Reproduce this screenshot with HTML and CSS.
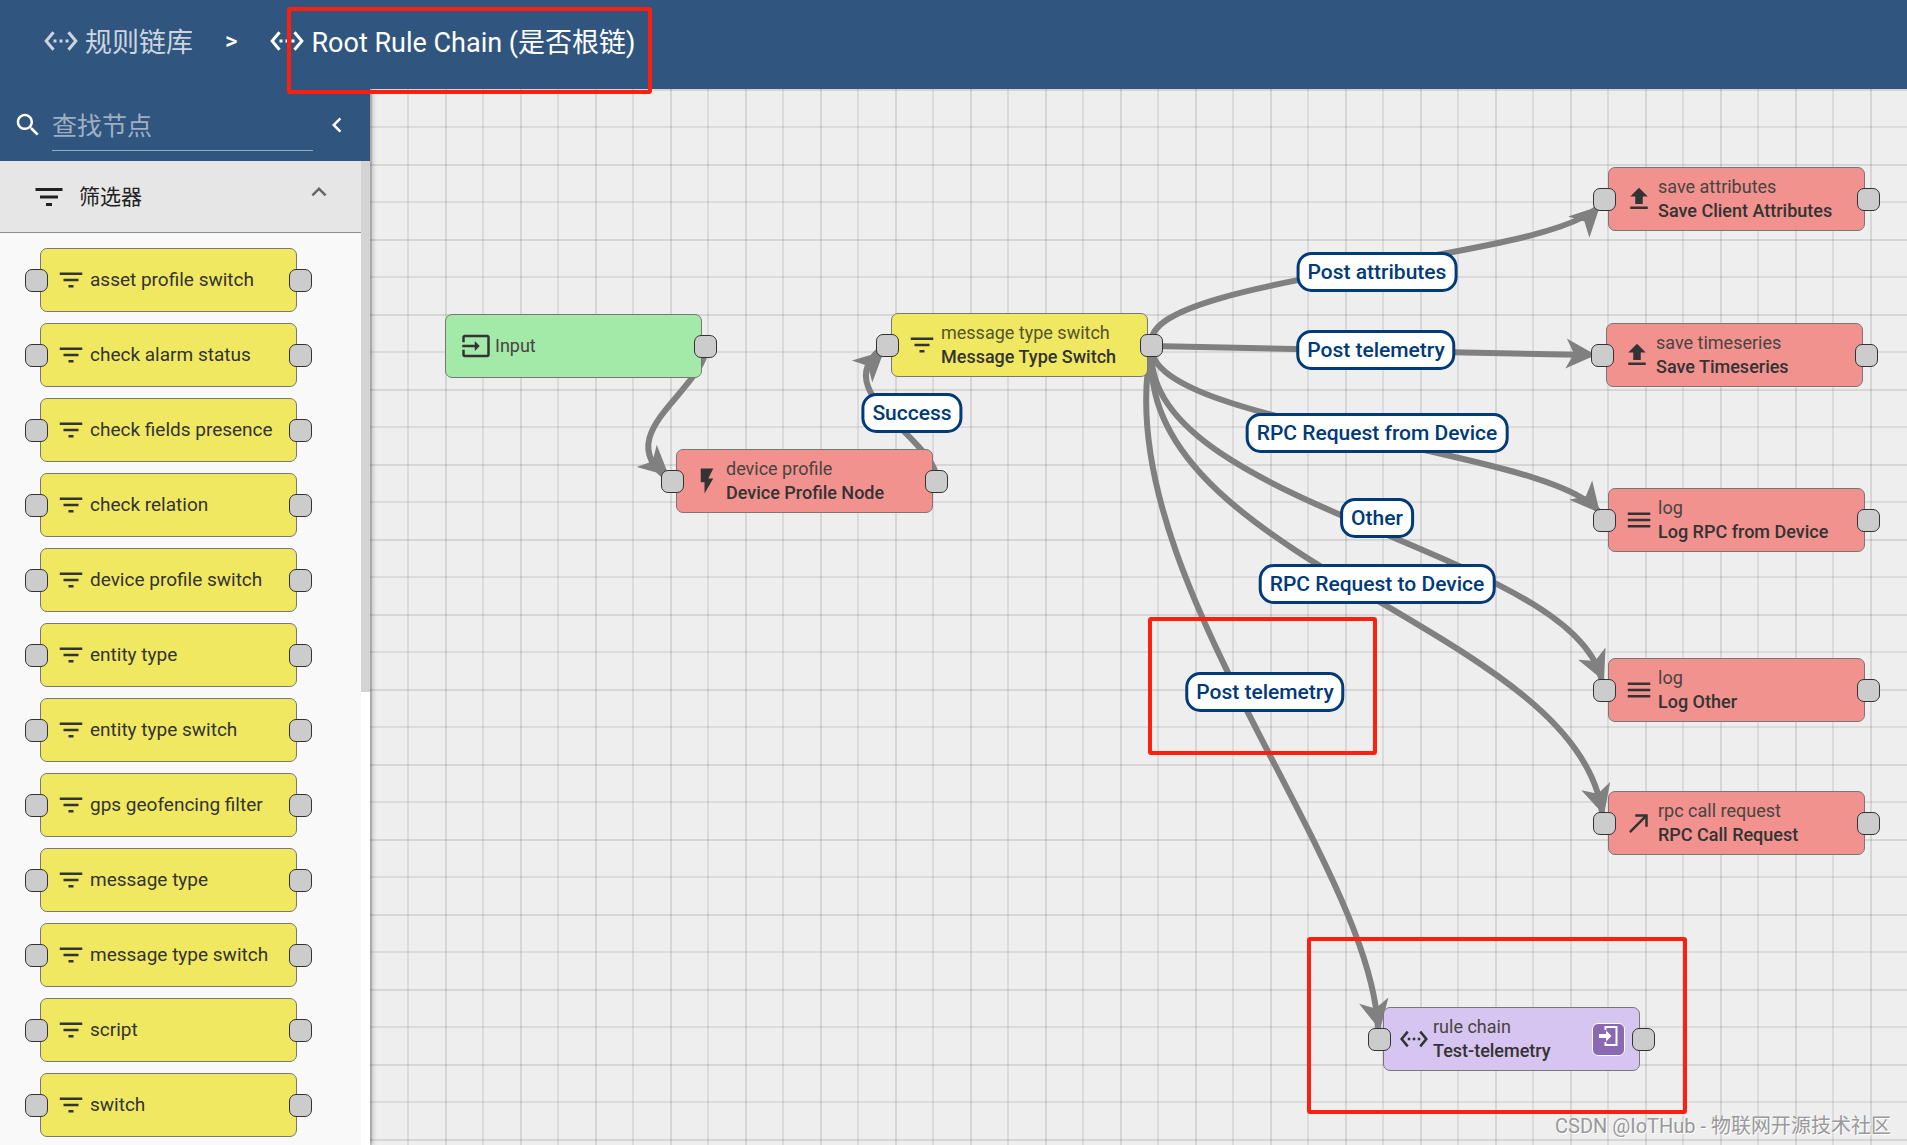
FILE: index.html
```html
<!DOCTYPE html>
<html lang="zh-CN">
<head>
<meta charset="utf-8">
<title>Root Rule Chain</title>
<link rel="stylesheet" href="styles.css">
</head>
<body>
<svg class="defs" aria-hidden="true">
  <symbol id="i-chain" viewBox="0 0 24 24"><path d="M7.77 6.76L6.23 5.48.82 12l5.41 6.52 1.54-1.28L3.42 12l4.35-5.24zM7 13h2v-2H7v2zm10-2h-2v2h2v-2zm-6 2h2v-2h-2v2zm6.77-7.52l-1.54 1.28L20.58 12l-4.35 5.24 1.54 1.28L23.18 12l-5.41-6.52z"/></symbol>
  <symbol id="i-filter" viewBox="0 0 24 24"><path d="M10 18h4v-2h-4v2zM3 6v2h18V6H3zm3 7h12v-2H6v2z"/></symbol>
  <symbol id="i-search" viewBox="0 0 24 24"><path d="M15.5 14h-.79l-.28-.27C15.41 12.59 16 11.11 16 9.5 16 5.91 13.09 3 9.5 3S3 5.91 3 9.5 5.91 16 9.5 16c1.61 0 3.09-.59 4.23-1.57l.27.28v.79l5 4.99L20.49 19l-4.99-5zm-6 0C7.01 14 5 11.99 5 9.5S7.01 5 9.5 5 14 7.01 14 9.5 11.99 14 9.5 14z"/></symbol>
  <symbol id="i-left" viewBox="0 0 24 24"><path d="M15.41 7.41L14 6l-6 6 6 6 1.41-1.41L10.83 12z"/></symbol>
  <symbol id="i-up" viewBox="0 0 24 24"><path d="M12 8l-6 6 1.41 1.41L12 10.83l4.59 4.58L18 14z"/></symbol>
  <symbol id="i-input" viewBox="0 0 24 24"><path d="M21 3.01H3c-1.100 0-2 .9-2 2V9h2V4.990h18v14.030H3V15H1v4.010c0 1.100.9 1.980 2 1.980h18c1.100 0 2-.88 2-1.980v-14c0-1.110-.9-2-2-2zM11 16l4-4-4-4v3H1v2h10v3z"/></symbol>
  <symbol id="i-flash" viewBox="0 0 24 24"><path d="M7 2v11h3v9l7-12h-4l4-8z"/></symbol>
  <symbol id="i-upload" viewBox="0 0 24 24"><path d="M5 20h14v-2H5v2zM9 16h6v-6h4l-7-7-7 7h4v6z"/></symbol>
  <symbol id="i-menu" viewBox="0 0 24 24"><path d="M3 18h18v-2H3v2zm0-5h18v-2H3v2zm0-7v2h18V6H3z"/></symbol>
  <symbol id="i-call" viewBox="0 0 24 24"><path d="M9 5v2h6.590L4 18.590 5.410 20 17 8.410V15h2V5z"/></symbol>
  <symbol id="i-open" viewBox="0 0 24 24"><path d="M7.500 2h13v20h-13v-4h2v2h9V4h-9v2h-2V2zM2 10h7V6.500l5.500 5.500L9 17.500V14H2z"/></symbol>
</svg>

<header class="header">
  <a class="crumb crumb-dim" href="#"><svg class="icon-lg"><use href="#i-chain"/></svg>规则链库</a>
  <span class="crumb-sep">&gt;</span>
  <a class="crumb" href="#"><svg class="icon-lg"><use href="#i-chain"/></svg>Root Rule Chain (是否根链)</a>
</header>

<main class="main">
  <aside class="sidebar">
    <div class="search">
      <label for="node-search" aria-label="查找节点"><svg class="icon"><use href="#i-search"/></svg></label>
      <input id="node-search" class="search-input" type="text" placeholder="查找节点">
      <button class="icon-btn" type="button" aria-label="收起"><svg class="icon"><use href="#i-left"/></svg></button>
    </div>
    <div class="library">
      <div class="library-body">
        <button class="group" type="button"><svg class="icon-lg"><use href="#i-filter"/></svg><span class="group-name">筛选器</span><svg class="icon group-arrow"><use href="#i-up"/></svg></button>
        <ul class="node-list">
          <li class="node filter both"><svg class="icon"><use href="#i-filter"/></svg><span>asset profile switch</span></li>
          <li class="node filter both"><svg class="icon"><use href="#i-filter"/></svg><span>check alarm status</span></li>
          <li class="node filter both"><svg class="icon"><use href="#i-filter"/></svg><span>check fields presence</span></li>
          <li class="node filter both"><svg class="icon"><use href="#i-filter"/></svg><span>check relation</span></li>
          <li class="node filter both"><svg class="icon"><use href="#i-filter"/></svg><span>device profile switch</span></li>
          <li class="node filter both"><svg class="icon"><use href="#i-filter"/></svg><span>entity type</span></li>
          <li class="node filter both"><svg class="icon"><use href="#i-filter"/></svg><span>entity type switch</span></li>
          <li class="node filter both"><svg class="icon"><use href="#i-filter"/></svg><span>gps geofencing filter</span></li>
          <li class="node filter both"><svg class="icon"><use href="#i-filter"/></svg><span>message type</span></li>
          <li class="node filter both"><svg class="icon"><use href="#i-filter"/></svg><span>message type switch</span></li>
          <li class="node filter both"><svg class="icon"><use href="#i-filter"/></svg><span>script</span></li>
          <li class="node filter both"><svg class="icon"><use href="#i-filter"/></svg><span>switch</span></li>
        </ul>
      </div>
      <div class="scrollbar"><div class="scroll-thumb"></div></div>
    </div>
  </aside>

  <section class="canvas">
    <svg class="edges" aria-hidden="true">
      <defs><path id="arrow" d="M0 0L-30-15L-22 0L-30 15z"/></defs>
      <g transform="translate(-370 -89)">
        <g class="lines">
          <path d="M706 346C706 390 604 435 671 481"/>
          <path d="M937 481C937 437 820 391 886 345"/>
          <path d="M1152 345C1135 273 1585 260 1603 199"/>
          <path d="M1152 346L1590 355"/>
          <path d="M1152 345C1140 428 1588 450 1603 520"/>
          <path d="M1152 345C1134 509 1596 551 1603 690"/>
          <path d="M1152 345C1130 565 1594 629 1603 823"/>
          <path d="M1152 345C1102 568 1383 872 1378 1039"/>
        </g>
        <g class="heads">
          <use href="#arrow" transform="translate(669 476) rotate(42)"/>
          <use href="#arrow" transform="translate(884 351) rotate(-43)"/>
          <use href="#arrow" transform="translate(1600 206) rotate(-45)"/>
          <use href="#arrow" transform="translate(1596 355) rotate(3)"/>
          <use href="#arrow" transform="translate(1600 513) rotate(50)"/>
          <use href="#arrow" transform="translate(1604 681) rotate(66)"/>
          <use href="#arrow" transform="translate(1604 815) rotate(74)"/>
          <use href="#arrow" transform="translate(1380 1030) rotate(78)"/>
        </g>
      </g>
    </svg>

    <div class="node input out" style="left:75px;top:225px"><svg class="icon"><use href="#i-input"/></svg><span>Input</span></div>
    <div class="node action both" style="left:306px;top:360px"><svg class="icon"><use href="#i-flash"/></svg><span>device profile<b>Device Profile Node</b></span></div>
    <div class="node filter both" style="left:521px;top:224px"><svg class="icon"><use href="#i-filter"/></svg><span>message type switch<b>Message Type Switch</b></span></div>
    <div class="node action both" style="left:1238px;top:78px"><svg class="icon"><use href="#i-upload"/></svg><span>save attributes<b>Save Client Attributes</b></span></div>
    <div class="node action both" style="left:1236px;top:234px"><svg class="icon"><use href="#i-upload"/></svg><span>save timeseries<b>Save Timeseries</b></span></div>
    <div class="node action both" style="left:1238px;top:399px"><svg class="icon"><use href="#i-menu"/></svg><span>log<b>Log RPC from Device</b></span></div>
    <div class="node action both" style="left:1238px;top:569px"><svg class="icon"><use href="#i-menu"/></svg><span>log<b>Log Other</b></span></div>
    <div class="node action both" style="left:1238px;top:702px"><svg class="icon"><use href="#i-call"/></svg><span>rpc call request<b>RPC Call Request</b></span></div>
    <div class="node chain both" style="left:1013px;top:918px"><svg class="icon"><use href="#i-chain"/></svg><span>rule chain<b>Test-telemetry</b></span><button class="open-btn" type="button" aria-label="打开规则链"><svg class="icon-sm"><use href="#i-open"/></svg></button></div>

    <div class="edge-label" style="left:542px;top:324px">Success</div>
    <div class="edge-label" style="left:1007px;top:183px">Post attributes</div>
    <div class="edge-label" style="left:1006px;top:261px">Post telemetry</div>
    <div class="edge-label" style="left:1007px;top:344px">RPC Request from Device</div>
    <div class="edge-label" style="left:1007px;top:429px">Other</div>
    <div class="edge-label" style="left:1007px;top:495px">RPC Request to Device</div>
    <div class="edge-label" style="left:895px;top:603px">Post telemetry</div>

    <div class="mark mark-edge"></div>
    <div class="mark mark-chain"></div>
    <div class="watermark">CSDN @IoTHub - 物联网开源技术社区</div>
  </section>
</main>
<div class="mark mark-title"></div>
</body>
</html>
```
FILE: styles.css
```css
* { box-sizing: border-box; }

body {
  margin: 0;
  height: 100vh;
  display: flex;
  flex-direction: column;
  position: relative;
  overflow: hidden;
  font-family: Roboto, "Noto Sans CJK SC", sans-serif;
  font-size: 18px;
  color: #333;
}

button {
  padding: 0;
  border: 0;
  background: none;
  font: inherit;
  color: inherit;
}

svg { fill: currentColor; flex: none; }
.defs { position: absolute; width: 0; height: 0; }
.icon { width: 30px; height: 30px; display: block; }
.icon-lg { width: 36px; height: 36px; display: block; }
.icon-sm { width: 24px; height: 24px; display: block; }

/* Header */
.header {
  flex: none;
  height: 89px;
  padding: 0 43px 8px;
  display: flex;
  align-items: center;
  background: #305680;
  color: #fff;
  font-size: 27px;
}
.crumb {
  display: flex;
  align-items: center;
  gap: 6px;
  color: #fff;
  text-decoration: none;
  white-space: nowrap;
}
.crumb-dim { color: rgba(255, 255, 255, .75); }
.crumb-sep { padding: 0 32px; font-size: 24px; font-weight: 500; }

.main { flex: 1; min-height: 0; display: flex; }

/* Node library */
.sidebar {
  flex: none;
  width: 370px;
  display: flex;
  flex-direction: column;
  position: relative;
  z-index: 1;
  box-shadow: 1px 0 6px rgba(0, 0, 0, .4);
  clip-path: inset(0 -10px 0 0);
}
.search {
  flex: none;
  height: 72px;
  padding: 0 18px 0 13px;
  display: flex;
  align-items: center;
  background: #305680;
  color: #fff;
}
.search-input {
  flex: 1;
  min-width: 0;
  height: 51px;
  margin: 0 9px;
  padding: 4px 0 0;
  border: 0;
  border-bottom: 1px solid rgba(255, 255, 255, .5);
  outline: 0;
  background: none;
  color: #fff;
  font: inherit;
  font-size: 25px;
}
.search-input::placeholder { color: rgba(255, 255, 255, .55); }

.library { flex: 1; min-height: 0; display: flex; background: #f9f9f9; }
.library-body { flex: 1; min-width: 0; overflow: hidden; }
.scrollbar { width: 9px; background: #fff; }
.scroll-thumb { height: 54%; background: #d4d4d4; }

.group {
  width: 100%;
  height: 72px;
  padding: 0 27px 0 31px;
  display: flex;
  align-items: center;
  gap: 12px;
  border-bottom: 1px solid #8f8f8f;
  background: #e6e6e6;
  color: #212121;
  font-size: 21px;
}
.group-name { flex: 1; margin-bottom: 4px; text-align: left; }
.group-arrow { color: #666; margin-bottom: 10px; }

.node-list {
  margin: 0;
  padding: 15px 40px;
  display: flex;
  flex-direction: column;
  gap: 11px;
  list-style: none;
  font-size: 19px;
}

/* Nodes */
.node {
  flex: none;
  position: relative;
  width: 257px;
  height: 64px;
  padding: 0 14px 0 15px;
  display: flex;
  align-items: center;
  gap: 4px;
  border: 1px solid #777;
  border-radius: 7px;
  line-height: 24px;
  white-space: nowrap;
}
.canvas .node { position: absolute; color: #333; }
.canvas .node span { color: #4a4340; }
.canvas .node b { display: block; font-weight: 500; color: #333; }
.filter { background: #f1e861; }
.canvas .filter span { color: #55532f; }
.input { background: #a3eaa9; }
.action { background: #f1928f; }
.chain { background: #d6c4f1; }

.both::before,
.node::after {
  content: "";
  position: absolute;
  top: 20px;
  width: 21px;
  height: 21px;
  border: 1px solid #333;
  border-radius: 7px;
  background: #ccc;
}
.both::before { left: -16px; }
.node::after { right: -16px; }

.open-btn {
  width: 33px;
  height: 33px;
  margin-left: auto;
  display: grid;
  justify-items: center;
  align-items: start;
  border: 1px solid #fff;
  border-radius: 6px;
  background: #8969b4;
  color: #fff;
}

/* Canvas: each 75px tile carries two grid lines */
.canvas {
  flex: 1;
  min-width: 0;
  position: relative;
  overflow: hidden;
  background-color: #eee;
  background-image:
    linear-gradient(to right, rgba(0, 0, 0, .1) 2px, transparent 2px 37px, rgba(0, 0, 0, .08) 37px 39px, transparent 39px),
    linear-gradient(to bottom, rgba(0, 0, 0, .1) 2px, transparent 2px 37px, rgba(0, 0, 0, .08) 37px 39px, transparent 39px);
  background-size: 75px 75px;
}
.edges { position: absolute; inset: 0; width: 100%; height: 100%; }
.lines { fill: none; stroke: #808080; stroke-width: 6; }
.heads { fill: #808080; }

.edge-label {
  position: absolute;
  transform: translate(-50%, -50%);
  height: 40px;
  padding: 0 8px;
  border: 3px solid #003a79;
  border-radius: 15px;
  background: #fff;
  color: #003a79;
  font-size: 21px;
  font-weight: 500;
  line-height: 34px;
  white-space: nowrap;
}

/* Red highlight frames */
.mark {
  position: absolute;
  border: 4px solid #ff1f10;
  border-radius: 3px;
  pointer-events: none;
}
.mark-title { left: 287px; top: 7px; width: 365px; height: 87px; z-index: 2; }
.mark-edge { left: 778px; top: 528px; width: 229px; height: 138px; }
.mark-chain { left: 937px; top: 848px; width: 380px; height: 177px; }

.watermark {
  position: absolute;
  right: 16px;
  bottom: 4px;
  font-size: 20px;
  line-height: 30px;
  color: #999;
  text-shadow: 1px 1px 0 #fff;
}
```
